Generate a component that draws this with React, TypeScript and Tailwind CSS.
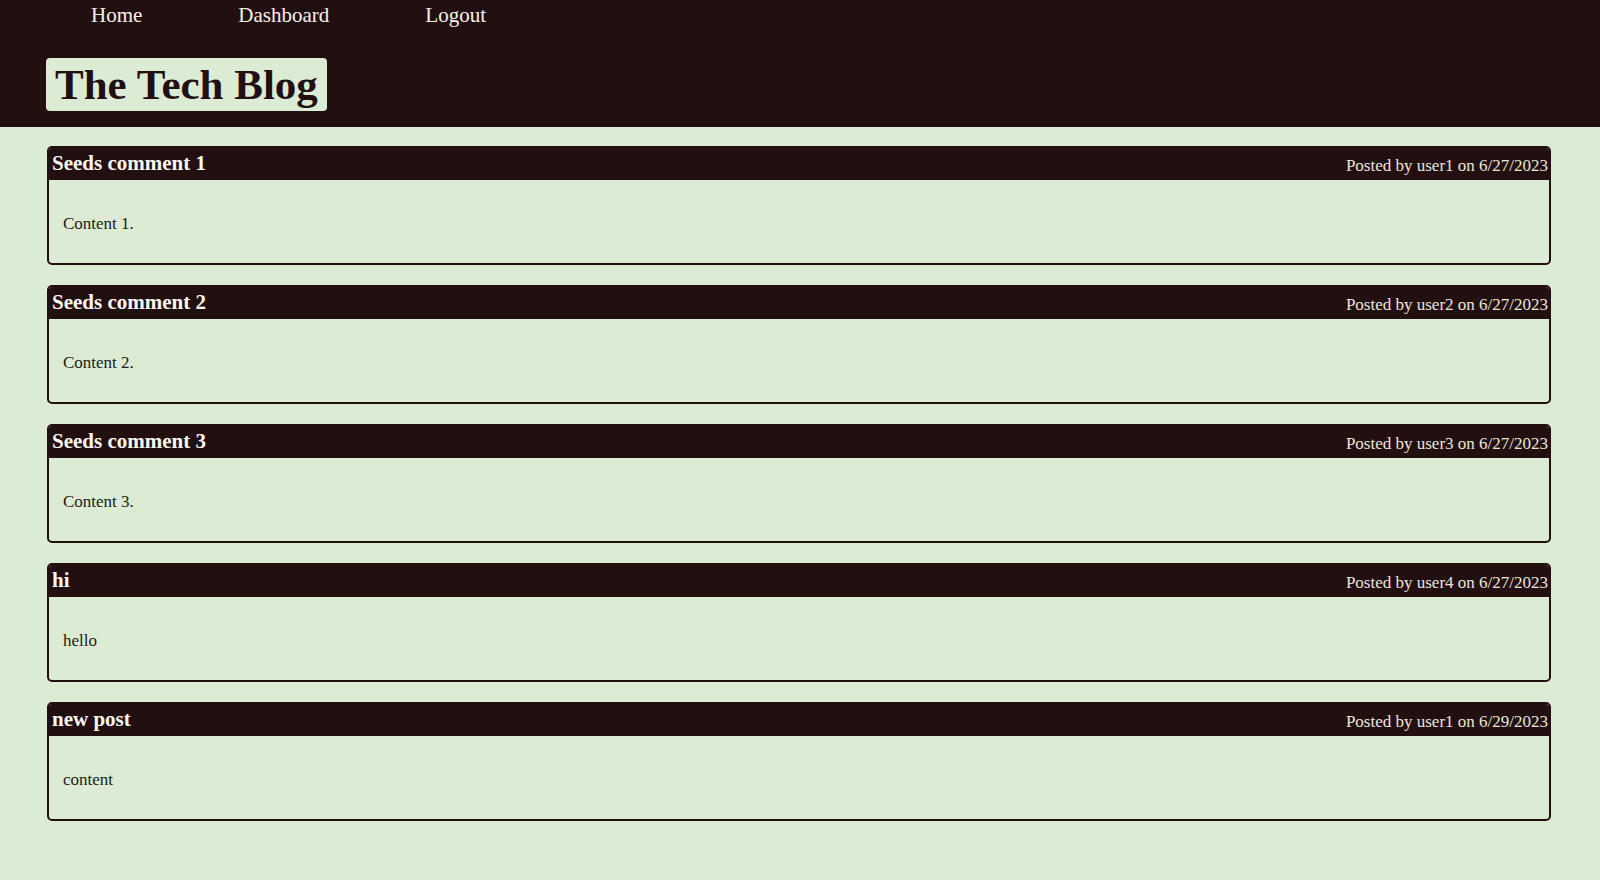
const posts = [
  { title: 'Seeds comment 1', user: 'user1', date: '6/27/2023', body: 'Content 1.' },
  { title: 'Seeds comment 2', user: 'user2', date: '6/27/2023', body: 'Content 2.' },
  { title: 'Seeds comment 3', user: 'user3', date: '6/27/2023', body: 'Content 3.' },
  { title: 'hi', user: 'user4', date: '6/27/2023', body: 'hello' },
  { title: 'new post', user: 'user1', date: '6/29/2023', body: 'content' },
];

const App = () => {
  return (
    <div className="min-h-screen bg-[#dcebd4] font-['Liberation_Serif',serif]">
      {/* Top bar */}
      <header className="bg-[#221010] pb-[16px]">
        <nav className="h-[32px] flex items-center gap-[96px] pl-[91px] text-[21px] text-[#f6f2ea]">
          <a href="#">Home</a>
          <a href="#">Dashboard</a>
          <a href="#">Logout</a>
        </nav>
        <div className="mt-[26px] ml-[46px] inline-flex h-[53px] items-center rounded-[4px] bg-[#dcebd4] px-[9px]">
          <h1 className="text-[43px] font-bold leading-none text-[#221010]">The Tech Blog</h1>
        </div>
      </header>

      {/* Posts */}
      <main className="pt-[19px] pl-[47px] pr-[49px] flex flex-col gap-[20px]">
        {posts.map((p, i) => (
          <div key={i} className="rounded-[5px] border-2 border-[#221010] overflow-hidden">
            <div className="h-[32px] bg-[#221010] flex items-end justify-between pl-[3px] pr-[1px] pb-[6px]">
              <h2 className="text-[21px] font-bold leading-none text-[#fbf8f2]">{p.title}</h2>
              <span className="text-[17px] leading-none text-[#ece6da]">
                Posted by {p.user} on {p.date}
              </span>
            </div>
            <div className="pt-[33px] pb-[29px] px-[14px]">
              <p className="text-[17px] leading-[21px] text-[#221a16]">{p.body}</p>
            </div>
          </div>
        ))}
      </main>
    </div>
  );
};

export default App;
